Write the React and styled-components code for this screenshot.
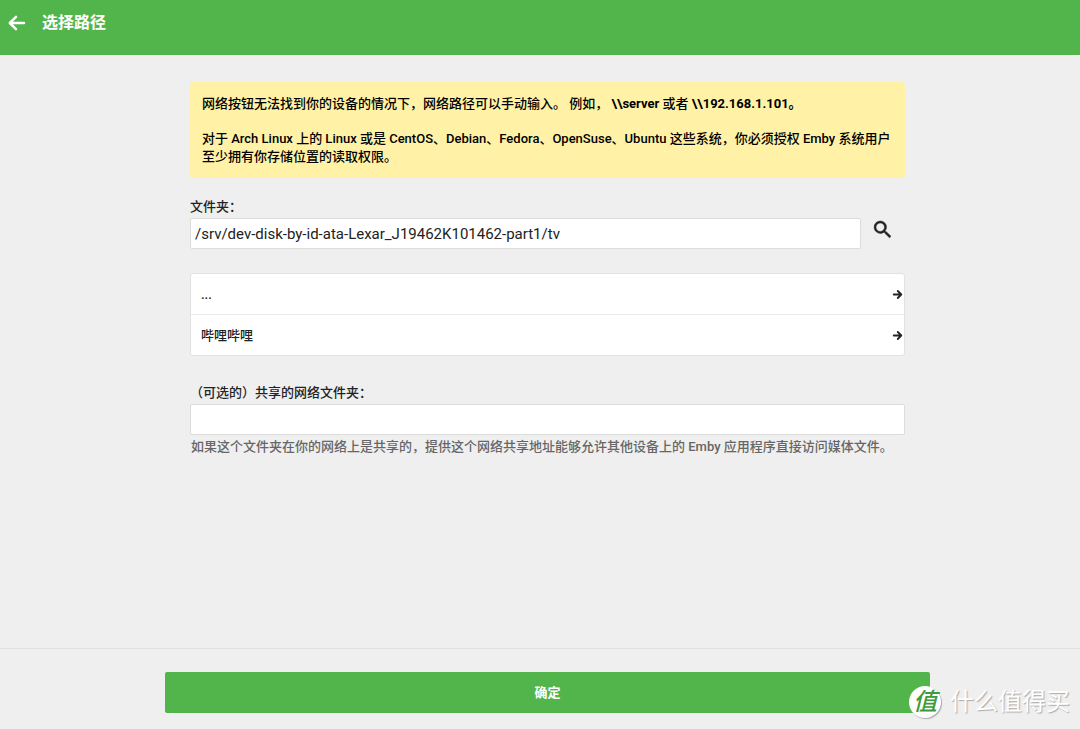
import React, { useState } from "react";
import styled, { createGlobalStyle } from "styled-components";

const folders = ["...", "哔哩哔哩"];

const App = () => {
  const [path, setPath] = useState(
    "/srv/dev-disk-by-id-ata-Lexar_J19462K101462-part1/tv"
  );
  const [share, setShare] = useState("");

  return (
    <Page>
      <GlobalStyle />
      <Header>
        <BackButton type="button" aria-label="返回">
          <Arrow size={24} back />
        </BackButton>
        <h1>选择路径</h1>
      </Header>

      <Main>
        <Notice>
          <p>
            网络按钮无法找到你的设备的情况下，网络路径可以手动输入。 例如，{" "}
            <b>\\server</b> 或者 <b>\\192.168.1.101。</b>
          </p>
          <p>
            对于 Arch Linux 上的 Linux 或是 CentOS、Debian、Fedora、OpenSuse、Ubuntu
            这些系统，你必须授权 Emby 系统用户至少拥有你存储位置的读取权限。
          </p>
        </Notice>

        <Field>
          <label htmlFor="path">文件夹：</label>
          <InputRow>
            <TextInput
              id="path"
              type="text"
              value={path}
              onChange={(e) => setPath(e.target.value)}
            />
            <SearchButton type="button" aria-label="刷新">
              <svg width="24" height="24" viewBox="0 0 24 24">
                <path
                  fill="currentColor"
                  stroke="currentColor"
                  strokeWidth="0.5"
                  d="M15 13.5h-.79l-.28-.27A6 6 0 0 0 15.5 9.2 6.2 6.2 0 1 0 9.3 15.4c1.54 0 2.95-.56 4.03-1.5l.27.28v.79l4.9 4.8L20 18.3l-5-4.8zm-5.7 0C6.9 13.5 5 11.6 5 9.2S6.9 5 9.3 5s4.2 1.9 4.2 4.2-1.9 4.3-4.2 4.3z"
                />
              </svg>
            </SearchButton>
          </InputRow>
        </Field>

        <FolderList>
          {folders.map((name) => (
            <li key={name}>
              <FolderButton type="button">
                <span>{name}</span>
                <Arrow size={13} />
              </FolderButton>
            </li>
          ))}
        </FolderList>

        <Field>
          <label htmlFor="share">（可选的）共享的网络文件夹：</label>
          <TextInput
            id="share"
            type="text"
            value={share}
            onChange={(e) => setShare(e.target.value)}
          />
          <Hint>
            如果这个文件夹在你的网络上是共享的，提供这个网络共享地址能够允许其他设备上的
            Emby 应用程序直接访问媒体文件。
          </Hint>
        </Field>
      </Main>

      <Footer>
        <SubmitButton type="submit">确定</SubmitButton>
      </Footer>

      <Watermark>
        <Badge>值</Badge>
        <span>什么值得买</span>
      </Watermark>
    </Page>
  );
};

const Arrow = ({ size, back }) => (
  <svg
    width={size}
    height={size}
    viewBox="0 0 24 24"
    fill="none"
    stroke="currentColor"
    strokeWidth={back ? 2.5 : 3.4}
    strokeLinecap="round"
    strokeLinejoin="round"
  >
    {back ? (
      <path d="M19 12H5M11 5.8L4.8 12l6.2 6.2" />
    ) : (
      <path d="M5 12h14M12.5 5.5L19 12l-6.5 6.5" />
    )}
  </svg>
);

export default App;

const GlobalStyle = createGlobalStyle`
  * {
    box-sizing: border-box;
  }
  body {
    margin: 0;
    background-color: #efefef;
    color: #222;
    font-family: Roboto, "Noto Sans CJK SC", sans-serif;
    font-size: 13px;
    font-weight: 500;
    line-height: 18px;
  }
  h1, p, ul {
    margin: 0;
    padding: 0;
  }
  button, input {
    font: inherit;
    color: inherit;
  }
  button {
    padding: 0;
    border: none;
    background: none;
    cursor: pointer;
  }
  svg {
    display: block;
    flex-shrink: 0;
  }
`;

const Page = styled.div`
  position: relative;
  min-height: 100vh;
  display: flex;
  flex-direction: column;
`;

const Header = styled.header`
  display: flex;
  align-items: flex-start;
  gap: 13px;
  padding: 11px 5px 20px;
  background-color: #52b54b;
  color: #fff;
  h1 {
    font-size: 16px;
    font-weight: 700;
    line-height: 24px;
  }
`;

const BackButton = styled.button`
  width: 24px;
  height: 24px;
`;

const Main = styled.main`
  flex: 1;
  width: 100%;
  max-width: 760px;
  margin: 0 auto;
  padding: 27px 15px 24px 30px;
`;

const Notice = styled.div`
  display: flex;
  flex-direction: column;
  gap: 17px;
  padding: 13px 12px 12px;
  border-radius: 3px;
  background-color: #fff2a7;
  color: #000;
  b {
    font-weight: 700;
  }
`;

const Field = styled.div`
  margin-top: 20px;
  label {
    display: block;
    margin-bottom: 2px;
  }
`;

const InputRow = styled.div`
  display: flex;
  gap: 10px;
`;

const TextInput = styled.input`
  display: block;
  flex: 1;
  width: 100%;
  min-width: 0;
  height: 31px;
  padding: 0 4px;
  border: 1px solid #dcdcdc;
  border-radius: 2px;
  outline: none;
  background-color: #fff;
  font-size: 15px;
  font-weight: 400;
`;

const SearchButton = styled.button`
  display: flex;
  justify-content: flex-start;
  width: 34px;
  height: 24px;
`;

const FolderList = styled.ul`
  margin: 24px 0 28px;
  list-style: none;
  border: 1px solid #e2e2e2;
  border-radius: 3px;
  background-color: #fff;
  li + li {
    border-top: 1px solid #ebebeb;
  }
`;

const FolderButton = styled.button`
  display: flex;
  align-items: center;
  justify-content: space-between;
  width: 100%;
  height: 40px;
  padding: 1px 0 0 10px;
`;

const Hint = styled.p`
  padding: 3px 1px;
  color: #666;
`;

const Footer = styled.footer`
  display: flex;
  justify-content: center;
  padding: 23px 0 16px 15px;
  border-top: 1px solid #e0e0e0;
`;

const SubmitButton = styled.button`
  width: 100%;
  max-width: 765px;
  height: 41px;
  border-radius: 2px;
  background-color: #52b54b;
  color: #fff;
  font-weight: 700;
`;

const Watermark = styled.div`
  position: absolute;
  right: 10px;
  bottom: 11px;
  display: flex;
  align-items: center;
  gap: 9px;
  color: #fff;
  font-size: 24px;
  font-weight: 400;
  line-height: 32px;
  text-shadow: 1px 1px 1px #aaa;
`;

const Badge = styled.span`
  width: 32px;
  height: 32px;
  border-radius: 50%;
  background-color: #fff;
  box-shadow: 1px 1px 1px #aaa;
  color: #3f9a3c;
  font-weight: 500;
  font-style: italic;
  text-align: center;
  text-shadow: none;
`;
